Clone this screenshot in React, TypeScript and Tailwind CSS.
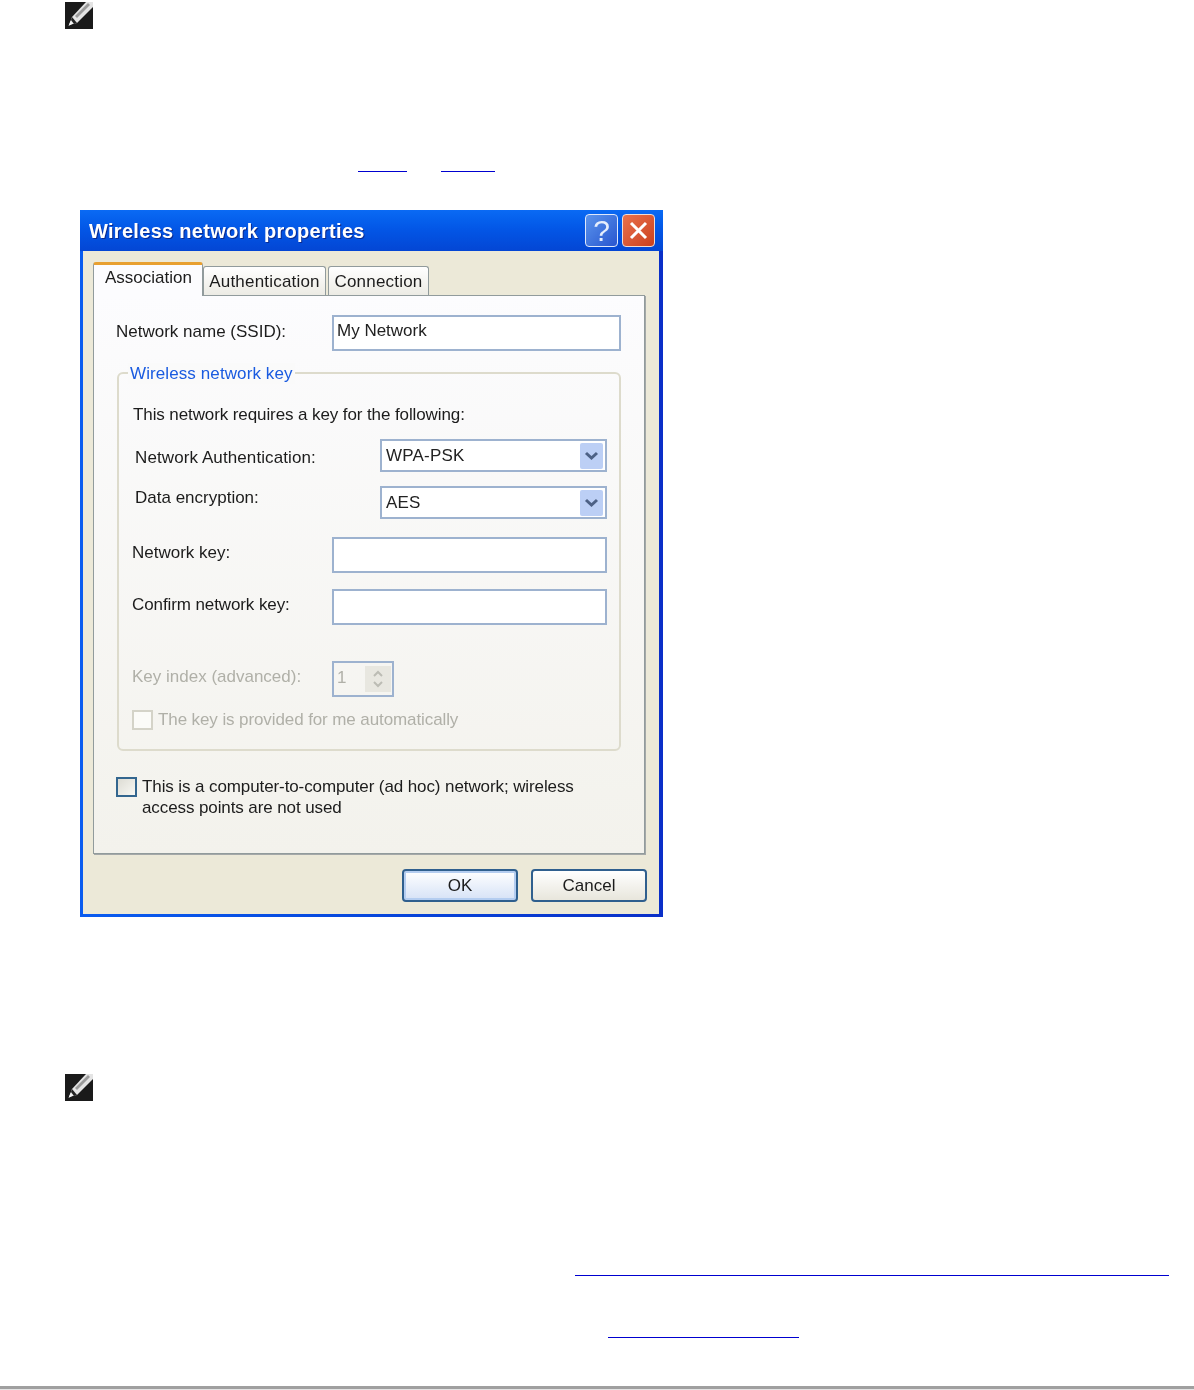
import React from "react";

const PencilIcon: React.FC = () => (
  <svg width="28" height="27" viewBox="0 0 28 27" className="block blur-[0.6px]">
    <rect width="28" height="27" fill="#1a1a1a" />
    <path d="M21 0 L28 0 L28 5 L12 21 L4 23 L7 15 Z" fill="#e4e4e4" />
    <path d="M23 1 L10 14 L12 16 L25 3 Z" fill="#9a9a9a" />
    <path d="M7 15 L12 21 L9 22 L6 18 Z" fill="#222222" />
    <path d="M5.5 19 L8 21.5 L3.5 24 Z" fill="#f4f4f4" />
  </svg>
);

const Chevron: React.FC = () => (
  <svg width="15" height="10" viewBox="0 0 15 10">
    <path d="M2 2 L7.5 7 L13 2" fill="none" stroke="#4d6185" strokeWidth="3" />
  </svg>
);

const SelectBox: React.FC<{ value: string }> = ({ value }) => (
  <div className="w-[227px] h-[33px] border-2 border-[#9db2cf] bg-white flex items-center justify-between pl-[4px] pr-[2px] text-[#222] tracking-[0.2px]">
    <span>{value}</span>
    <span className="w-[23px] h-[26px] rounded-[2px] bg-[#bccff5] flex items-center justify-center">
      <Chevron />
    </span>
  </div>
);

const TextInput: React.FC<{ width: string; value?: string }> = ({ width, value }) => (
  <div className={`${width} h-[36px] border-2 border-[#9db2cf] bg-white flex items-center pl-[3px] pb-[5px] text-[#222]`}>
    {value}
  </div>
);

const App: React.FC = () => {
  return (
    <div className="w-[1194px] h-[1390px] overflow-hidden bg-white font-['Liberation_Sans',Arial,sans-serif]">
      {/* Note icon */}
      <div className="pt-[2px] pl-[65px]">
        <PencilIcon />
      </div>

      {/* Link underlines */}
      <div className="mt-[142px] pl-[358px] flex gap-[34px]">
        <a href="#" className="block w-[49px] h-px bg-[#0000d0]"></a>
        <a href="#" className="block w-[54px] h-px bg-[#0000d0]"></a>
      </div>

      {/* Dialog */}
      <div className="mt-[38px] ml-[80px] w-[583px] h-[707px] bg-gradient-to-r from-[#0a5cf0] to-[#0a2fc8] flex flex-col blur-[0.5px]">
        <header className="h-[41px] shrink-0 bg-gradient-to-b from-[#0a6af4] via-[#0355e5] to-[#0446d4] flex items-center pl-[9px] pr-[8px]">
          <h1 className="text-white font-bold text-[20px] tracking-[0.3px] drop-shadow-[1px_1px_0_#0a2a90]">
            Wireless network properties
          </h1>
          <div className="ml-auto flex gap-[4px]">
            <button className="w-[33px] h-[33px] rounded-[4px] border border-[#dfe8fb] bg-gradient-to-br from-[#5c94ec] to-[#2a55cf] text-[#e6eefc] text-[30px] leading-none flex items-center justify-center">
              ?
            </button>
            <button className="w-[33px] h-[33px] rounded-[4px] border border-[#f0dcd4] bg-gradient-to-br from-[#e8714c] to-[#cc3f1c] flex items-center justify-center">
              <svg width="19" height="19" viewBox="0 0 19 19">
                <path d="M2 2 L17 17 M17 2 L2 17" stroke="#ffffff" strokeWidth="3" />
              </svg>
            </button>
          </div>
        </header>

        <div className="ml-[3px] mr-[4px] mb-[3px] grow bg-[#ece9d8] pl-[10px] pt-[11px] text-[17px] leading-[21px] text-[#1c1c1c]">
          {/* Tabs */}
          <div className="h-[33px] flex items-end">
            <div className="relative z-10 -mb-px w-[110px] h-[34px] bg-[#fcfcfe] border-x border-[#919b9c] border-t-[3px] border-t-[#e8a030] rounded-t-[3px] pl-[11px] pb-[7px] flex items-center">
              Association
            </div>
            <div className="w-[123px] h-[29px] bg-gradient-to-b from-white to-[#ecebe4] border border-b-0 border-[#919b9c] rounded-t-[3px] flex items-center justify-center tracking-[0.2px]">
              Authentication
            </div>
            <div className="ml-[2px] w-[101px] h-[29px] bg-gradient-to-b from-white to-[#ecebe4] border border-b-0 border-[#919b9c] rounded-t-[3px] flex items-center justify-center tracking-[0.2px]">
              Connection
            </div>
          </div>

          {/* Tab panel */}
          <div className="w-[552px] h-[559px] border border-[#919b9c] shadow-[1px_1px_0_#a4a8a8] bg-gradient-to-b from-[#fcfcfe] to-[#f3f2ec] pt-[19px]">
            <div className="flex items-center pl-[22px]">
              <label className="w-[216px] pb-[3px]">Network name (SSID):</label>
              <TextInput width="w-[289px]" value="My Network" />
            </div>

            {/* Group box */}
            <div className="relative mt-[21px] ml-[23px] w-[504px] h-[379px] border-2 border-[#dddbcc] rounded-[6px] pt-[28px]">
              <span className="absolute -top-[11px] left-[9px] bg-[#fafafa] px-[2px] text-[#1a5be0] tracking-[0.1px]">
                Wireless network key
              </span>
              <p className="pl-[14px] h-[24px] flex items-center tracking-[-0.1px]">This network requires a key for the following:</p>
              <div className="mt-[13px] pl-[16px] flex items-center">
                <label className="w-[245px] pt-[3px] tracking-[0.1px]">Network Authentication:</label>
                <SelectBox value="WPA-PSK" />
              </div>
              <div className="mt-[14px] pl-[16px] flex items-center">
                <label className="w-[245px] pb-[10px]">Data encryption:</label>
                <SelectBox value="AES" />
              </div>
              <div className="mt-[18px] pl-[13px] flex items-center">
                <label className="w-[200px] pb-[6px]">Network key:</label>
                <TextInput width="w-[275px]" />
              </div>
              <div className="mt-[16px] pl-[13px] flex items-center">
                <label className="w-[200px] pb-[6px] tracking-[-0.1px]">Confirm network key:</label>
                <TextInput width="w-[275px]" />
              </div>
              <div className="mt-[36px] pl-[13px] flex items-center text-[#b0b0a8]">
                <label className="w-[200px] pb-[6px]">Key index (advanced):</label>
                <div className="w-[62px] h-[36px] border-2 border-[#9db2cf] flex items-center justify-between pl-[3px] pr-[1px]">
                  <span className="pb-[4px]">1</span>
                  <span className="w-[26px] h-[26px] bg-[#e8e7e0] flex flex-col items-center justify-center gap-[4px]">
                    <svg width="12" height="7" viewBox="0 0 12 7">
                      <path d="M2 6 L6 2 L10 6" fill="none" stroke="#bcbcb4" strokeWidth="2" />
                    </svg>
                    <svg width="12" height="7" viewBox="0 0 12 7">
                      <path d="M2 1 L6 5 L10 1" fill="none" stroke="#bcbcb4" strokeWidth="2" />
                    </svg>
                  </span>
                </div>
              </div>
              <div className="mt-[12px] pl-[13px] flex items-center gap-[5px] text-[#b0b0a8] tracking-[-0.1px]">
                <span className="w-[21px] h-[20px] border-2 border-[#d4d3c8] bg-[#fbfbf8]"></span>
                <span>The key is provided for me automatically</span>
              </div>
            </div>

            <div className="mt-[25px] ml-[22px] flex gap-[5px] tracking-[-0.1px]">
              <span className="mt-px w-[21px] h-[20px] shrink-0 border-2 border-[#33668f] bg-gradient-to-br from-[#dddcd4] to-[#f8f8f4]"></span>
              <p className="w-[450px]">
                This is a computer-to-computer (ad hoc) network; wireless access points are not used
              </p>
            </div>
          </div>

          {/* Buttons */}
          <div className="mt-[15px] ml-[309px] flex gap-[13px]">
            <button className="w-[116px] h-[33px] rounded-[4px] border-2 border-[#2f5f8e] bg-gradient-to-b from-[#ffffff] to-[#d6e2f6] shadow-[inset_0_0_0_2px_#b4cdf0] flex items-center justify-center text-[#1c1c1c]">
              OK
            </button>
            <button className="w-[116px] h-[33px] rounded-[4px] border-2 border-[#2f5f8e] bg-gradient-to-b from-[#ffffff] to-[#e8e6dc] flex items-center justify-center text-[#1c1c1c]">
              Cancel
            </button>
          </div>
        </div>
      </div>

      {/* Second note icon */}
      <div className="mt-[157px] pl-[65px]">
        <PencilIcon />
      </div>

      <a href="#" className="block mt-[174px] ml-[575px] w-[594px] h-px bg-[#0000d0]"></a>
      <a href="#" className="block mt-[61px] ml-[608px] w-[191px] h-px bg-[#0000d0]"></a>

      {/* Footer rule */}
      <div className="mt-[48px] h-[3px] bg-[#a0a0a0]"></div>
      <div className="h-px bg-[#e4e4e4]"></div>
    </div>
  );
};

export default App;
